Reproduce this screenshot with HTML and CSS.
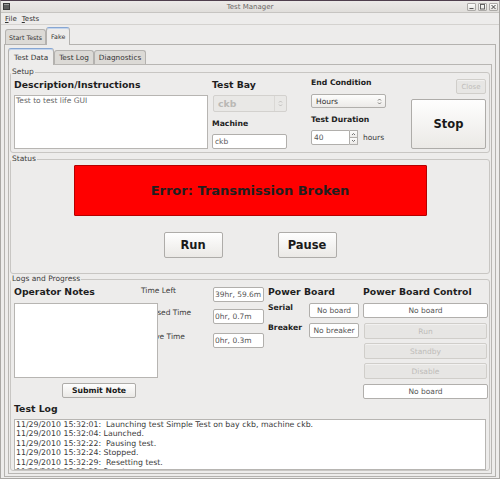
FILE: index.html
```html
<!DOCTYPE html>
<html lang="en">
<head>
  <meta charset="UTF-8">
  <title>Test Manager</title>
  <link rel="stylesheet" href="styles.css">
</head>
<body>
  <div class="window">
    <div class="titlebar">
      <div class="title-left"><span class="app-icon"></span></div>
      <div class="title">Test Manager</div>
      <div class="wm-buttons">
        <span class="wm-btn"><svg width="7" height="6" viewBox="0 0 7 6"><path d="M1.5 4.5h4" stroke="#555" stroke-width="1"/></svg></span>
        <span class="wm-btn"><svg width="7" height="6" viewBox="0 0 7 6"><rect x="1.5" y="0.5" width="4" height="4.5" fill="none" stroke="#555" stroke-width="0.9"/></svg></span>
        <span class="wm-btn"><svg width="7" height="6" viewBox="0 0 7 6"><path d="M1.5 1l4 4M5.5 1l-4 4" stroke="#444" stroke-width="1"/></svg></span>
      </div>
    </div>

    <div class="menubar">
      <span class="menu-item"><u>F</u>ile</span>
      <span class="menu-item"><u>T</u>ests</span>
    </div>

    <div class="tabbar outer-tabs">
      <span class="tab">Start Tests</span>
      <span class="tab active">Fake</span>
    </div>

    <div class="outer-pane">
      <div class="tabbar inner-tabs">
        <span class="tab active">Test Data</span>
        <span class="tab">Test Log</span>
        <span class="tab">Diagnostics</span>
      </div>

      <div class="inner-pane">
        <fieldset class="group setup">
          <legend>Setup</legend>
          <div class="setup-row">
            <div class="desc-col">
              <div class="heading">Description/Instructions</div>
              <div class="textbox desc-box">Test to test life GUI</div>
            </div>

            <div class="bay-col">
              <div class="heading">Test Bay</div>
              <div class="combo combo-disabled">
                <span class="combo-text">ckb</span>
                <span class="combo-arrow"><svg width="5" height="9" viewBox="0 0 5 9"><path d="M1 3.5 2.5 2 4 3.5M1 5.5 2.5 7 4 5.5" fill="none" stroke="#b9b7b4" stroke-width=".9"/></svg></span>
              </div>
              <div class="label-sm machine-label">Machine</div>
              <div class="field machine-field">ckb</div>
            </div>

            <div class="cond-col">
              <div class="label-sm cond-label">End Condition</div>
              <div class="combo hours-combo">
                <span class="combo-text">Hours</span>
                <span class="combo-arrow"><svg width="5" height="9" viewBox="0 0 5 9"><path d="M1 3.5 2.5 2 4 3.5M1 5.5 2.5 7 4 5.5" fill="none" stroke="#6f6d6a" stroke-width=".9"/></svg></span>
              </div>
              <div class="label-sm duration-label">Test Duration</div>
              <div class="spin-row">
                <div class="spin">
                  <span class="field spin-field">40</span>
                  <span class="spin-arrows">
                    <span class="spin-btn"><svg width="5" height="4" viewBox="0 0 5 4"><path d="M1 3 2.5 1.5 4 3" fill="none" stroke="#666" stroke-width=".9"/></svg></span>
                    <span class="spin-btn"><svg width="5" height="4" viewBox="0 0 5 4"><path d="M1 1 2.5 2.5 4 1" fill="none" stroke="#666" stroke-width=".9"/></svg></span>
                  </span>
                </div>
                <span class="unit">hours</span>
              </div>
            </div>

            <div class="action-col">
              <button class="btn close-btn" disabled>Close</button>
              <button class="btn big-btn stop-btn">Stop</button>
            </div>
          </div>
        </fieldset>

        <fieldset class="group status">
          <legend>Status</legend>
          <div class="status-body">
            <div class="error-banner">Error: Transmission Broken</div>
            <div class="status-buttons">
              <button class="btn big-btn run-btn">Run</button>
              <button class="btn big-btn run-btn">Pause</button>
            </div>
          </div>
        </fieldset>

        <fieldset class="group logs">
          <legend>Logs and Progress</legend>
          <div class="logs-top">
            <div class="notes-col">
              <div class="heading">Operator Notes</div>
              <div class="textbox notes-box"></div>
              <button class="btn submit-btn">Submit Note</button>
            </div>

            <div class="times-col">
              <div class="time-row">
                <span class="time-label">Time Left</span>
                <span class="field time-field">39hr, 59.6m</span>
              </div>
              <div class="time-row">
                <span class="time-label">Elapsed Time</span>
                <span class="field time-field">0hr, 0.7m</span>
              </div>
              <div class="time-row third">
                <span class="time-label">Active Time</span>
                <span class="field time-field">0hr, 0.3m</span>
              </div>
            </div>

            <div class="board-col">
              <div class="heading">Power Board</div>
              <div class="board-row">
                <span class="label-sm board-label">Serial</span>
                <span class="field board-field">No board</span>
              </div>
              <div class="board-row">
                <span class="label-sm board-label">Breaker</span>
                <span class="field board-field">No breaker</span>
              </div>
            </div>

            <div class="control-col">
              <div class="heading">Power Board Control</div>
              <div class="field control-field">No board</div>
              <button class="btn control-btn" disabled>Run</button>
              <button class="btn control-btn" disabled>Standby</button>
              <button class="btn control-btn" disabled>Disable</button>
              <div class="field control-field last">No board</div>
            </div>
          </div>

          <div class="heading log-heading">Test Log</div>
          <div class="textbox log-box">
            <div class="log-line">11/29/2010 15:32:01:  Launching test Simple Test on bay ckb, machine ckb.</div>
            <div class="log-line">11/29/2010 15:32:04: Launched.</div>
            <div class="log-line">11/29/2010 15:32:22:  Pausing test.</div>
            <div class="log-line">11/29/2010 15:32:24: Stopped.</div>
            <div class="log-line">11/29/2010 15:32:29:  Resetting test.</div>
            <div class="log-line">11/29/2010 15:32:31: Reset.</div>
          </div>
        </fieldset>
      </div>
    </div>
  </div>
</body>
</html>
```

FILE: styles.css
```css
* {
  box-sizing: border-box;
}

body {
  margin: 0;
  font-family: "DejaVu Sans", sans-serif;
  font-size: 7.5px;
  color: #333;
  background: #edeceb;
}

/* window frame */

.window {
  width: 500px;
  height: 479px;
  display: flex;
  flex-direction: column;
  background: #edeceb;
  border: 1px solid #a9a7a4;
  border-top-color: #4f3f4d;
}

.titlebar {
  flex: none;
  height: 12px;
  display: grid;
  grid-template-columns: 1fr auto 1fr;
  align-items: center;
  background: linear-gradient(#eceae8, #e0dedb);
  border-bottom: 1px solid #c6c4c1;
}

.app-icon {
  display: block;
  width: 7px;
  height: 7px;
  margin-left: 2px;
  background: #5d5d5d;
  border: 1px solid #3a3a3a;
  box-shadow: inset 0 1px 0 #9a9a9a;
}

.title {
  font-size: 7px;
  color: #6a6866;
}

.wm-buttons {
  display: flex;
  justify-content: flex-end;
  gap: 2px;
  margin-right: 1px;
}

.wm-btn {
  width: 9px;
  height: 8px;
  display: flex;
  align-items: center;
  justify-content: center;
  border: 1px solid #acaaa7;
  border-radius: 1px;
  background: linear-gradient(#fbfbfa, #e4e2df);
}

.menubar {
  flex: none;
  height: 12px;
  display: flex;
  align-items: center;
  gap: 5px;
  padding-left: 4px;
  font-size: 7px;
  color: #333;
  border-bottom: 1px solid #d4d2cf;
}

.menu-item u {
  text-decoration-thickness: 0.5px;
}

/* tabs */

.tabbar {
  flex: none;
  height: 20px;
  margin-bottom: -1px;
  display: flex;
  align-items: flex-end;
  position: relative;
  z-index: 1;
}

.tab {
  display: flex;
  align-items: center;
  margin-bottom: 1px;
  padding: 0 3px;
  color: #333;
  background: #dcdad6;
  border: 1px solid #b4b2af;
  border-bottom: none;
  border-radius: 3px 3px 0 0;
}

.tab.active {
  margin-bottom: 0;
  background: #edeceb;
  border-top-color: #86a6d3;
  box-shadow: inset 0 1px 0 #c3d4ec;
}

.outer-tabs {
  padding-left: 4px;
}

.outer-tabs .tab {
  height: 15px;
  font-size: 6.3px;
}

.outer-tabs .tab.active {
  height: 18px;
  padding: 0 4px;
}

.inner-tabs .tab {
  height: 14px;
  font-size: 7.3px;
  padding: 0 4px;
}

.inner-tabs .tab.active {
  height: 17px;
  padding: 0 5px;
}

.outer-pane {
  flex: 1;
  display: flex;
  flex-direction: column;
  margin: 0 3px 1px 3px;
  padding: 0 3px 2px 3px;
  border: 1px solid #b4b2af;
}

.inner-pane {
  flex: 1;
  display: flex;
  flex-direction: column;
  padding: 2px 1px 0 1px;
  border: 1px solid #b8b6b3;
}

/* group boxes */

.group {
  margin: 0;
  min-width: 0;
  padding: 2px 3px 0 3px;
  border: 1px solid #c8c6c3;
  border-radius: 3px;
}

.group legend {
  margin-left: -3px;
  padding: 0 1px;
  font-size: 7.5px;
  line-height: 10px;
  color: #3c3c3c;
}

.setup {
  height: 86px;
}

.status {
  height: 120px;
  margin-top: 1px;
  padding-top: 1px;
}

.logs {
  height: 197px;
  padding-right: 0;
}

/* shared widgets */

.heading {
  font-size: 9.3px;
  font-weight: bold;
  line-height: 12px;
  color: #1e1e1e;
}

.label-sm {
  font-size: 7.7px;
  font-weight: bold;
  line-height: 10px;
  color: #222;
}

.textbox {
  background: #fff;
  border: 1px solid #b7b5b2;
  color: #666;
  overflow: hidden;
}

.field {
  display: block;
  height: 15px;
  padding: 0 2px;
  line-height: 13px;
  background: #fff;
  border: 1px solid #b1afac;
  border-radius: 2px;
  color: #555;
  white-space: nowrap;
  overflow: hidden;
}

.btn {
  font-family: inherit;
  padding: 0;
  color: #1a1a1a;
  background: linear-gradient(#fefefe, #ebe9e6);
  border: 1px solid #aeaca9;
  border-radius: 2px;
  cursor: pointer;
}

.btn:disabled {
  color: #bebcb9;
  background: #e7e6e4;
  border-color: #d0ceca;
  box-shadow: inset 0 1px 0 #f2f1f0;
  cursor: default;
}

.big-btn {
  font-size: 11.5px;
  font-weight: bold;
}

.combo {
  display: flex;
  align-items: center;
  border: 1px solid #b1afac;
  border-radius: 2px;
  background: linear-gradient(#fdfdfc, #eceae8);
}

.combo-text {
  flex: 1;
  padding-left: 4px;
}

.combo-arrow {
  display: flex;
  align-items: center;
  padding: 0 3px;
  height: 100%;
}

/* setup */

.setup-row {
  display: flex;
}

.desc-col {
  width: 194px;
  flex: none;
  margin-right: 4px;
}

.desc-box {
  height: 54px;
  margin-top: 4px;
  line-height: 10px;
  padding: 0 1px;
}

.bay-col {
  width: 75px;
  flex: none;
  margin-right: 24px;
}

.combo-disabled {
  height: 17px;
  width: 74px;
  margin: 4px 0 0 1px;
  background: #e9e8e6;
  border-color: #d3d1ce;
  font-size: 9.3px;
  font-weight: bold;
  color: #bab8b5;
}

.combo-disabled .combo-arrow {
  border-left: 1px solid #dad8d5;
}

.machine-label {
  margin-top: 7px;
}

.machine-field {
  margin-top: 5px;
}

.cond-col {
  flex: 1;
}

.cond-label {
  margin-top: -1px;
}

.hours-combo {
  width: 75px;
  height: 14px;
  margin-top: 6px;
  color: #333;
}

.duration-label {
  margin-top: 7px;
}

.spin-row {
  display: flex;
  align-items: center;
  margin-top: 5px;
}

.spin {
  display: flex;
}

.spin-field {
  width: 39px;
  border-radius: 2px 0 0 2px;
}

.spin-arrows {
  display: flex;
  flex-direction: column;
  width: 8px;
  height: 15px;
}

.spin-btn {
  flex: 1;
  display: flex;
  align-items: center;
  justify-content: center;
  border: 1px solid #b1afac;
  border-left: none;
  background: linear-gradient(#fdfdfc, #eceae8);
}

.spin-btn + .spin-btn {
  border-top: none;
}

.unit {
  margin-left: 5px;
  color: #3a3a3a;
}

.action-col {
  width: 75px;
  flex: none;
  display: flex;
  flex-direction: column;
  align-items: flex-end;
}

.close-btn {
  width: 30px;
  height: 15px;
  font-size: 7px;
}

.stop-btn {
  width: 75px;
  height: 50px;
  margin-top: 5px;
}

/* status */

.status-body {
  display: flex;
  flex-direction: column;
  align-items: center;
}

.error-banner {
  width: 353px;
  height: 51px;
  display: flex;
  align-items: center;
  justify-content: center;
  background: #ff0000;
  border: 1px solid #b50000;
  border-radius: 1px;
  font-size: 13px;
  font-weight: bold;
  color: #1f1f1f;
}

.status-buttons {
  display: flex;
  gap: 55px;
  margin-top: 16px;
}

.run-btn {
  width: 59px;
  height: 26px;
}

/* logs and progress */

.logs-top {
  display: flex;
}

.notes-col {
  width: 127px;
  flex: none;
}

.notes-box {
  width: 144px;
  height: 75px;
  margin-top: 5px;
  position: relative;
  z-index: 1;
}

.submit-btn {
  display: block;
  width: 74px;
  height: 15px;
  margin: 5px 0 0 48px;
  font-size: 7.7px;
  font-weight: bold;
}

.times-col {
  width: 123px;
  flex: none;
  padding-top: 1px;
}

.time-row {
  display: flex;
  height: 15px;
}

.time-row + .time-row {
  margin-top: 7px;
}

.time-row.third {
  margin-top: 9px;
}

.time-label {
  width: 72px;
  margin-top: -1px;
  line-height: 10px;
  color: #3a3a3a;
}

.time-field {
  width: 51px;
  padding-left: 1px;
}

.board-col {
  width: 91px;
  flex: none;
  margin-left: 4px;
}

.board-row {
  display: flex;
  margin-top: 5px;
}

.board-label {
  width: 41px;
  line-height: 9px;
}

.board-field {
  width: 50px;
  text-align: center;
  padding: 0;
}

.control-col {
  width: 125px;
  flex: none;
  margin-left: 4px;
  display: flex;
  flex-direction: column;
}

.control-field {
  margin-top: 5px;
  text-align: center;
}

.control-field.last {
  margin-top: 5px;
}

.control-btn {
  width: 123px;
  height: 16px;
  margin: 4px 0 0 1px;
  font-size: 7.5px;
}

.control-field + .control-btn {
  margin-top: 5px;
}

.log-heading {
  margin-top: 4px;
}

.log-box {
  width: 472px;
  height: 51px;
  margin-top: 4px;
  padding: 0 1px;
  font-size: 7.8px;
  line-height: 9.4px;
  color: #3a3a3a;
}

.log-line {
  white-space: pre;
}
```
